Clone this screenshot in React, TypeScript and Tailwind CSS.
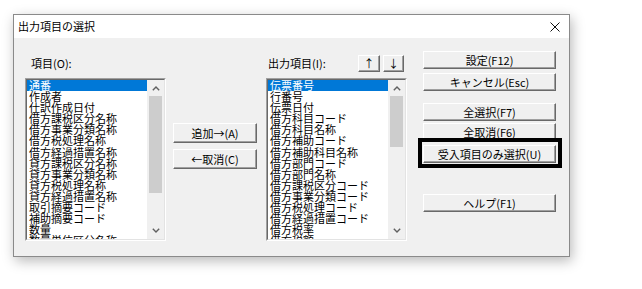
import React from "react";

const leftItems = [
  "通番",
  "作成者",
  "仕訳作成日付",
  "借方課税区分名称",
  "借方事業分類名称",
  "借方税処理名称",
  "借方経過措置名称",
  "貸方課税区分名称",
  "貸方事業分類名称",
  "貸方税処理名称",
  "貸方経過措置名称",
  "取引摘要コード",
  "補助摘要コード",
  "数量",
  "数量単位区分名称",
];

const rightItems = [
  "伝票番号",
  "行番号",
  "伝票日付",
  "借方科目コード",
  "借方科目名称",
  "借方補助コード",
  "借方補助科目名称",
  "借方部門コード",
  "借方部門名称",
  "借方課税区分コード",
  "借方事業分類コード",
  "借方税処理コード",
  "借方経過措置コード",
  "借方税率",
  "借方税額",
];

function Chevron({ down }: { down?: boolean }) {
  return (
    <svg width="8" height="5" viewBox="0 0 8 5">
      <polyline
        points={down ? "0.8,0.8 4,4 7.2,0.8" : "0.8,4.2 4,1 7.2,4.2"}
        fill="none"
        stroke="#606060"
        strokeWidth="1.4"
      />
    </svg>
  );
}

function ListBox({ items, thumb }: { items: string[]; thumb: string }) {
  return (
    <div className="w-[141px] h-[163px] border border-t-[#a0a0a0] border-l-[#a0a0a0] border-r-white border-b-white">
      <div className="h-full flex bg-white border border-t-[#696969] border-l-[#696969] border-r-[#e3e3e3] border-b-[#e3e3e3]">
        <div className="flex-1 overflow-hidden">
          {items.map((t, i) => (
            <div
              key={i}
              className={
                i === 0
                  ? "h-[11.1px] leading-[11.1px] pl-[2px] whitespace-nowrap bg-[#0078d7] text-white"
                  : "h-[11.1px] leading-[11.1px] pl-[2px] whitespace-nowrap text-black"
              }
            >
              {t}
            </div>
          ))}
        </div>
        <div className="w-[17px] flex flex-col bg-[#f0f0f0]">
          <div className="h-[16px] flex items-center justify-center">
            <Chevron />
          </div>
          <div className="flex-1 px-[2px]">
            <div className={`bg-[#cdcdcd] ${thumb}`} />
          </div>
          <div className="h-[17px] flex items-center justify-center">
            <Chevron down />
          </div>
        </div>
      </div>
    </div>
  );
}

function Btn({ children, className }: { children: React.ReactNode; className: string }) {
  return (
    <div
      className={`flex items-center justify-center bg-[#f0f0f0] border border-t-white border-l-white border-r-[#696969] border-b-[#696969] shadow-[inset_-1px_-1px_0_#a0a0a0] text-[11px] leading-none text-black whitespace-nowrap ${className}`}
    >
      {children}
    </div>
  );
}

export default function App() {
  return (
    <div className="w-[642px] h-[289px] bg-white pl-[13px] pt-[14px] font-['Noto_Sans_CJK_JP','Liberation_Sans',sans-serif] text-[11px]">
      <div className="w-[557px] h-[243px] flex flex-col border border-[#8a8a8a] shadow-[2px_4px_12px_rgba(0,0,0,0.28)]">
        <div className="h-[23px] bg-white flex items-center justify-between pl-[4px] pr-[9px]">
          <span className="text-[11px] text-black leading-none">出力項目の選択</span>
          <svg width="10" height="10" viewBox="0 0 10 10">
            <line x1="0.5" y1="0.5" x2="9.5" y2="9.5" stroke="#111" strokeWidth="1" />
            <line x1="9.5" y1="0.5" x2="0.5" y2="9.5" stroke="#111" strokeWidth="1" />
          </svg>
        </div>
        <div className="flex-1 bg-[#f0f0f0] flex items-start pl-[11px] pt-[13px]">
          {/* left list */}
          <div className="pt-[4px] w-[141px]">
            <div className="h-[17px] flex items-center pl-[6px] text-black">項目(O):</div>
            <div className="mt-[6px]">
              <ListBox items={leftItems} thumb="h-[97px]" />
            </div>
          </div>
          {/* middle buttons */}
          <div className="ml-[7px] pt-[72px] flex flex-col gap-[6px]">
            <Btn className="w-[84px] h-[20px]">追加→(A)</Btn>
            <Btn className="w-[84px] h-[20px]">←取消(C)</Btn>
          </div>
          {/* right list */}
          <div className="ml-[9px] pt-[4px] w-[141px]">
            <div className="h-[17px] flex items-center text-black">
              <span className="pl-[2px]">出力項目(I):</span>
              <div className="ml-auto mr-[3px] flex gap-[3px]">
                <Btn className="w-[22px] h-[17px]">↑</Btn>
                <Btn className="w-[21px] h-[17px]">↓</Btn>
              </div>
            </div>
            <div className="mt-[6px]">
              <ListBox items={rightItems} thumb="h-[51px]" />
            </div>
          </div>
          {/* right buttons */}
          <div className="relative ml-[16px] w-[133px] flex flex-col">
            <Btn className="h-[18px]">設定(F12)</Btn>
            <Btn className="h-[18px] mt-[4px]">キャンセル(Esc)</Btn>
            <Btn className="h-[18px] mt-[12px]">全選択(F7)</Btn>
            <Btn className="h-[18px] mt-[2px]">全取消(F6)</Btn>
            <Btn className="h-[18px] mt-[4px]">受入項目のみ選択(U)</Btn>
            <Btn className="h-[18px] mt-[31px]">ヘルプ(F1)</Btn>
            <div className="absolute left-[-5px] top-[87px] w-[144px] h-[30px] border-[4px] border-black" />
          </div>
        </div>
      </div>
    </div>
  );
}
